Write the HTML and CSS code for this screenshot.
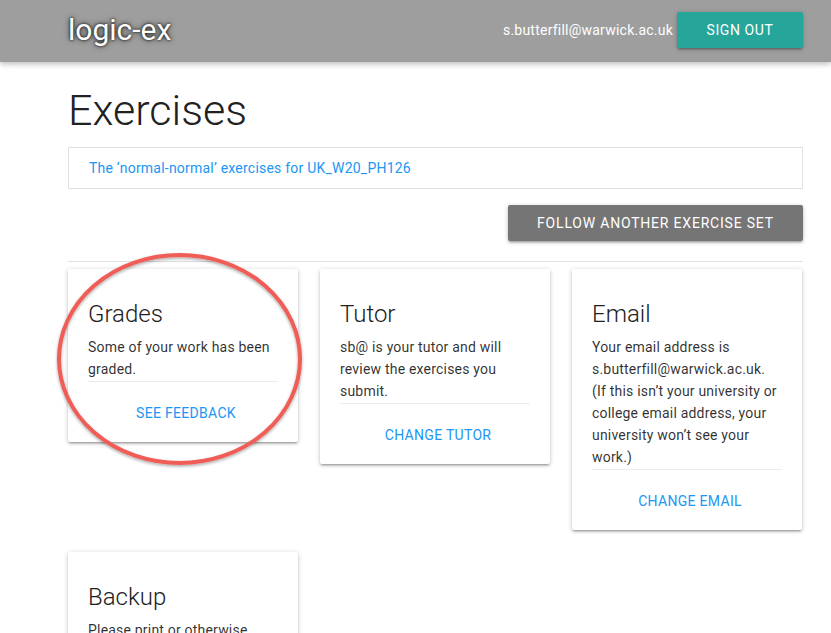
FILE: index.html
```html
<!DOCTYPE html>
<html>
<head>
<meta charset="utf-8">
<link rel="stylesheet" href="styles.css">
</head>
<body>
<header class="topbar">
  <div class="topbar-inner">
    <div class="brand">logic-ex</div>
    <div class="user">
      <span class="user-email">s.butterfill@warwick.ac.uk</span>
      <button class="btn btn-teal">Sign out</button>
    </div>
  </div>
</header>
<main class="container">
  <h1 class="page-title">Exercises</h1>
  <div class="set-box"><a class="set-link">The ‘normal-normal’ exercises for UK_W20_PH126</a></div>
  <div class="follow-row"><button class="btn btn-grey">Follow another exercise set</button></div>
  <hr class="rule">
  <div class="cards">
    <div class="card card-grades">
      <div class="card-content">
        <div class="card-title">Grades</div>
        <p>Some of your work has been graded.</p>
      </div>
      <div class="card-action"><a>See feedback</a></div>
      <svg class="circle" width="252" height="222" viewBox="0 0 252 222">
        <defs>
          <filter id="sh" x="-10%" y="-10%" width="120%" height="120%">
            <feDropShadow dx="0" dy="1.5" stdDeviation="1.5" flood-color="#000" flood-opacity="0.35"/>
          </filter>
        </defs>
        <ellipse cx="124.5" cy="107" rx="120.5" ry="104" fill="none" stroke="#ef5d57" stroke-width="4" filter="url(#sh)"/>
      </svg>
    </div>
    <div class="card">
      <div class="card-content">
        <div class="card-title">Tutor</div>
        <p>sb@ is your tutor and will review the exercises you submit.</p>
      </div>
      <div class="card-action"><a>Change tutor</a></div>
    </div>
    <div class="card">
      <div class="card-content">
        <div class="card-title">Email</div>
        <p>Your email address is s.butterfill@warwick.ac.uk. (If this isn’t your university or college email address, your university won’t see your work.)</p>
      </div>
      <div class="card-action"><a>Change email</a></div>
    </div>
    <div class="card">
      <div class="card-content">
        <div class="card-title">Backup</div>
        <p>Please print or otherwise save a copy of your work.</p>
      </div>
      <div class="card-action"><a>Backup</a></div>
    </div>
  </div>
</main>
</body>
</html>
```

FILE: styles.css
```css
* { box-sizing: border-box; }
html, body { margin: 0; padding: 0; }
body {
  font-family: Roboto, "Liberation Sans", sans-serif;
  background: #fff;
  color: rgba(0,0,0,0.87);
  overflow: hidden;
  height: 633px;
}
.topbar {
  height: 62px;
  background: #9e9e9e;
  box-shadow: 0 2px 5px rgba(0,0,0,0.2), 0 2px 8px rgba(0,0,0,0.08);
  position: relative;
  z-index: 2;
}
.topbar-inner {
  width: 735px;
  margin-left: 68px;
  height: 62px;
  display: flex;
  align-items: center;
  justify-content: space-between;
}
.brand {
  color: #fff;
  font-size: 30px;
  line-height: 1;
  margin-top: -2px;
  text-shadow: 0 0 3px #000, 0 0 6px rgba(0,0,0,0.6);
}
.user { display: flex; align-items: center; gap: 4px; margin-top: -2px; }
.user-email { color: #fff; font-size: 14px; letter-spacing: 0.23px; }
.btn {
  font-family: inherit;
  border: none;
  color: #fff;
  text-transform: uppercase;
  font-size: 14px;
  letter-spacing: 0.6px;
  height: 36px;
  border-radius: 2px;
  box-shadow: 0 2px 2px 0 rgba(0,0,0,0.14), 0 3px 1px -2px rgba(0,0,0,0.12), 0 1px 5px 0 rgba(0,0,0,0.2);
  padding: 0;
}
.btn-teal { background: #26a69a; width: 126px; }
.btn-grey { background: #757575; width: 295px; letter-spacing: 0.8px; }
.container { width: 735px; margin-left: 68px; }
.page-title {
  margin: 0;
  padding-top: 22px;
  font-size: 43px;
  font-weight: 300;
  line-height: 52px;
  color: #212121;
  height: 85px;
}
.set-box {
  border: 1px solid #e0e0e0;
  height: 42px;
  display: flex;
  align-items: center;
  padding: 0 20px;
}
.set-link { color: #2196f3; font-size: 14px; letter-spacing: 0.22px; }
.follow-row { display: flex; justify-content: flex-end; margin-top: 16px; }
.rule { border: none; border-top: 1px solid #e0e0e0; margin: 20px 0 7px; }
.cards {
  display: grid;
  grid-template-columns: repeat(3, 230px);
  column-gap: 22px;
  row-gap: 22px;
  align-items: start;
}
.card {
  background: #fff;
  border-radius: 2px;
  box-shadow: 0 2px 2px 0 rgba(0,0,0,0.14), 0 3px 1px -2px rgba(0,0,0,0.12), 0 1px 5px 0 rgba(0,0,0,0.2);
  padding: 0 20px;
  position: relative;
}
.card-content { padding-top: 29px; }
.card-title {
  font-size: 24px;
  font-weight: 300;
  line-height: 32px;
  color: #212121;
  margin-bottom: 6px;
}
.card p { margin: 0 0 1px; font-size: 14px; line-height: 22px; color: rgba(0,0,0,0.82); letter-spacing: 0.2px; }
.card-action {
  border-top: 1px solid rgba(160,160,160,0.2);
  padding: 20px 0 18px 6px;
  text-align: center;
  line-height: 22px;
}
.card-action a { color: #2196f3; font-size: 14px; text-transform: uppercase; letter-spacing: 0.3px; }
.circle {
  position: absolute;
  left: -13px;
  top: -17px;
  pointer-events: none;
  z-index: 3;
}
```
